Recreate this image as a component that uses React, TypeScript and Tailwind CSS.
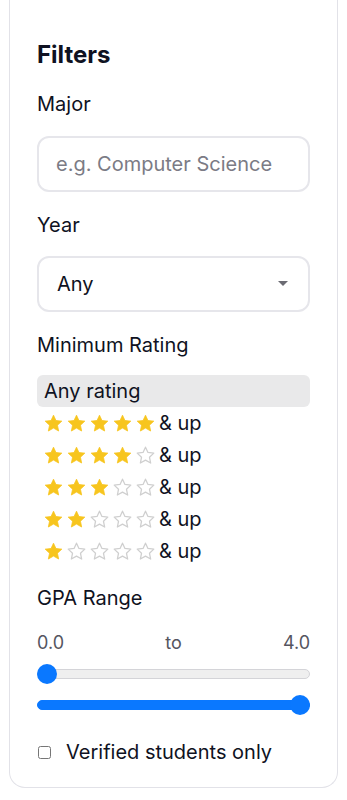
import React, { useState } from 'react'

const STAR = '12,1.5 15.1,8.2 22.5,9 17,14.1 18.5,21.5 12,17.8 5.5,21.5 7,14.1 1.5,9 8.9,8.2'

function Star({ filled }: { filled: boolean }) {
  return (
    <span className="flex w-[23px] justify-start">
      <svg width="19" height="19" viewBox="0 0 24 24">
        <polygon
          points={STAR}
          fill={filled ? '#f7c51e' : 'none'}
          stroke={filled ? '#f7c51e' : '#cfcfcf'}
          strokeWidth={filled ? 1 : 1.6}
          strokeLinejoin="round"
        />
      </svg>
    </span>
  )
}

function Slider({ value, filled }: { value: number; filled: boolean }) {
  const pct = (value / 4) * 100
  return (
    <div className="relative flex h-[20px] w-full items-center">
      <div
        className={`h-[10px] w-full rounded-full border ${filled ? 'border-[#0a78ff] bg-[#0a78ff]' : 'border-[#d4d4d8] bg-[#efefef]'}`}
      />
      <div className="absolute inset-y-0 right-[10px] left-[10px]">
        <div
          className="absolute top-0 h-[20px] w-[20px] -translate-x-1/2 rounded-full bg-[#0a78ff]"
          style={{ left: `${pct}%` }}
        />
      </div>
    </div>
  )
}

export default function App() {
  const [rating, setRating] = useState(0)
  const [minGpa] = useState(0)
  const [maxGpa] = useState(4)
  const [verified, setVerified] = useState(false)

  return (
    <div className="min-h-screen bg-white px-[9px] pb-[13px] font-['Inter',sans-serif] text-[#0f1222]">
      <div className="rounded-b-2xl border border-t-0 border-[#e2e2e8] px-[27px] pt-[40px] pb-[20px]">
        <h2 className="text-[24px] leading-[30px] font-bold">Filters</h2>

        <div className="mt-[19px]">
          <label className="block text-[20px] leading-[30px]">Major</label>
          <input
            placeholder="e.g. Computer Science"
            className="mt-[17px] h-[56px] w-full rounded-xl border-2 border-[#e6e6eb] px-[17px] text-[20px] outline-none placeholder:text-[#7b7b85]"
          />
        </div>

        <div className="mt-[18px]">
          <label className="block text-[20px] leading-[30px]">Year</label>
          <div className="mt-[16px] flex h-[56px] w-full items-center justify-between rounded-xl border-2 border-[#e6e6eb] pr-[20px] pl-[18px] text-[20px]">
            <span>Any</span>
            <svg width="10" height="6" viewBox="0 0 10 6">
              <polygon points="0,0 10,0 5,5" fill="#6b6b73" />
            </svg>
          </div>
        </div>

        <div className="mt-[18px]">
          <label className="block text-[20px] leading-[30px]">Minimum Rating</label>
          <div className="mt-[15px] flex flex-col">
            <button
              onClick={() => setRating(0)}
              className={`flex h-[32px] items-center rounded-md px-[7px] text-left text-[20px] ${rating === 0 ? 'bg-[#e9e9ea]' : ''}`}
            >
              Any rating
            </button>
            {[5, 4, 3, 2, 1].map(n => (
              <button
                key={n}
                onClick={() => setRating(n)}
                className={`flex h-[32px] items-center rounded-md px-[7px] text-[20px] ${rating === n ? 'bg-[#e9e9ea]' : ''}`}
              >
                {[1, 2, 3, 4, 5].map(i => (
                  <Star key={i} filled={i <= n} />
                ))}
                <span>&amp; up</span>
              </button>
            ))}
          </div>
        </div>

        <div className="mt-[16px]">
          <label className="block text-[20px] leading-[30px]">GPA Range</label>
          <div className="mt-[16px] flex justify-between text-[18px] leading-[27px] text-[#55555f]">
            <span>{minGpa.toFixed(1)}</span>
            <span>to</span>
            <span>{maxGpa.toFixed(1)}</span>
          </div>
          <div className="mt-[8px] flex flex-col gap-[11px]">
            <Slider value={minGpa} filled={false} />
            <Slider value={maxGpa} filled={true} />
          </div>
        </div>

        <label className="mt-[22px] flex h-[30px] items-center gap-[15px] text-[20px]">
          <input
            type="checkbox"
            checked={verified}
            onChange={e => setVerified(e.target.checked)}
            className="ml-[1px] h-[13px] w-[13px]"
          />
          Verified students only
        </label>
      </div>
    </div>
  )
}
